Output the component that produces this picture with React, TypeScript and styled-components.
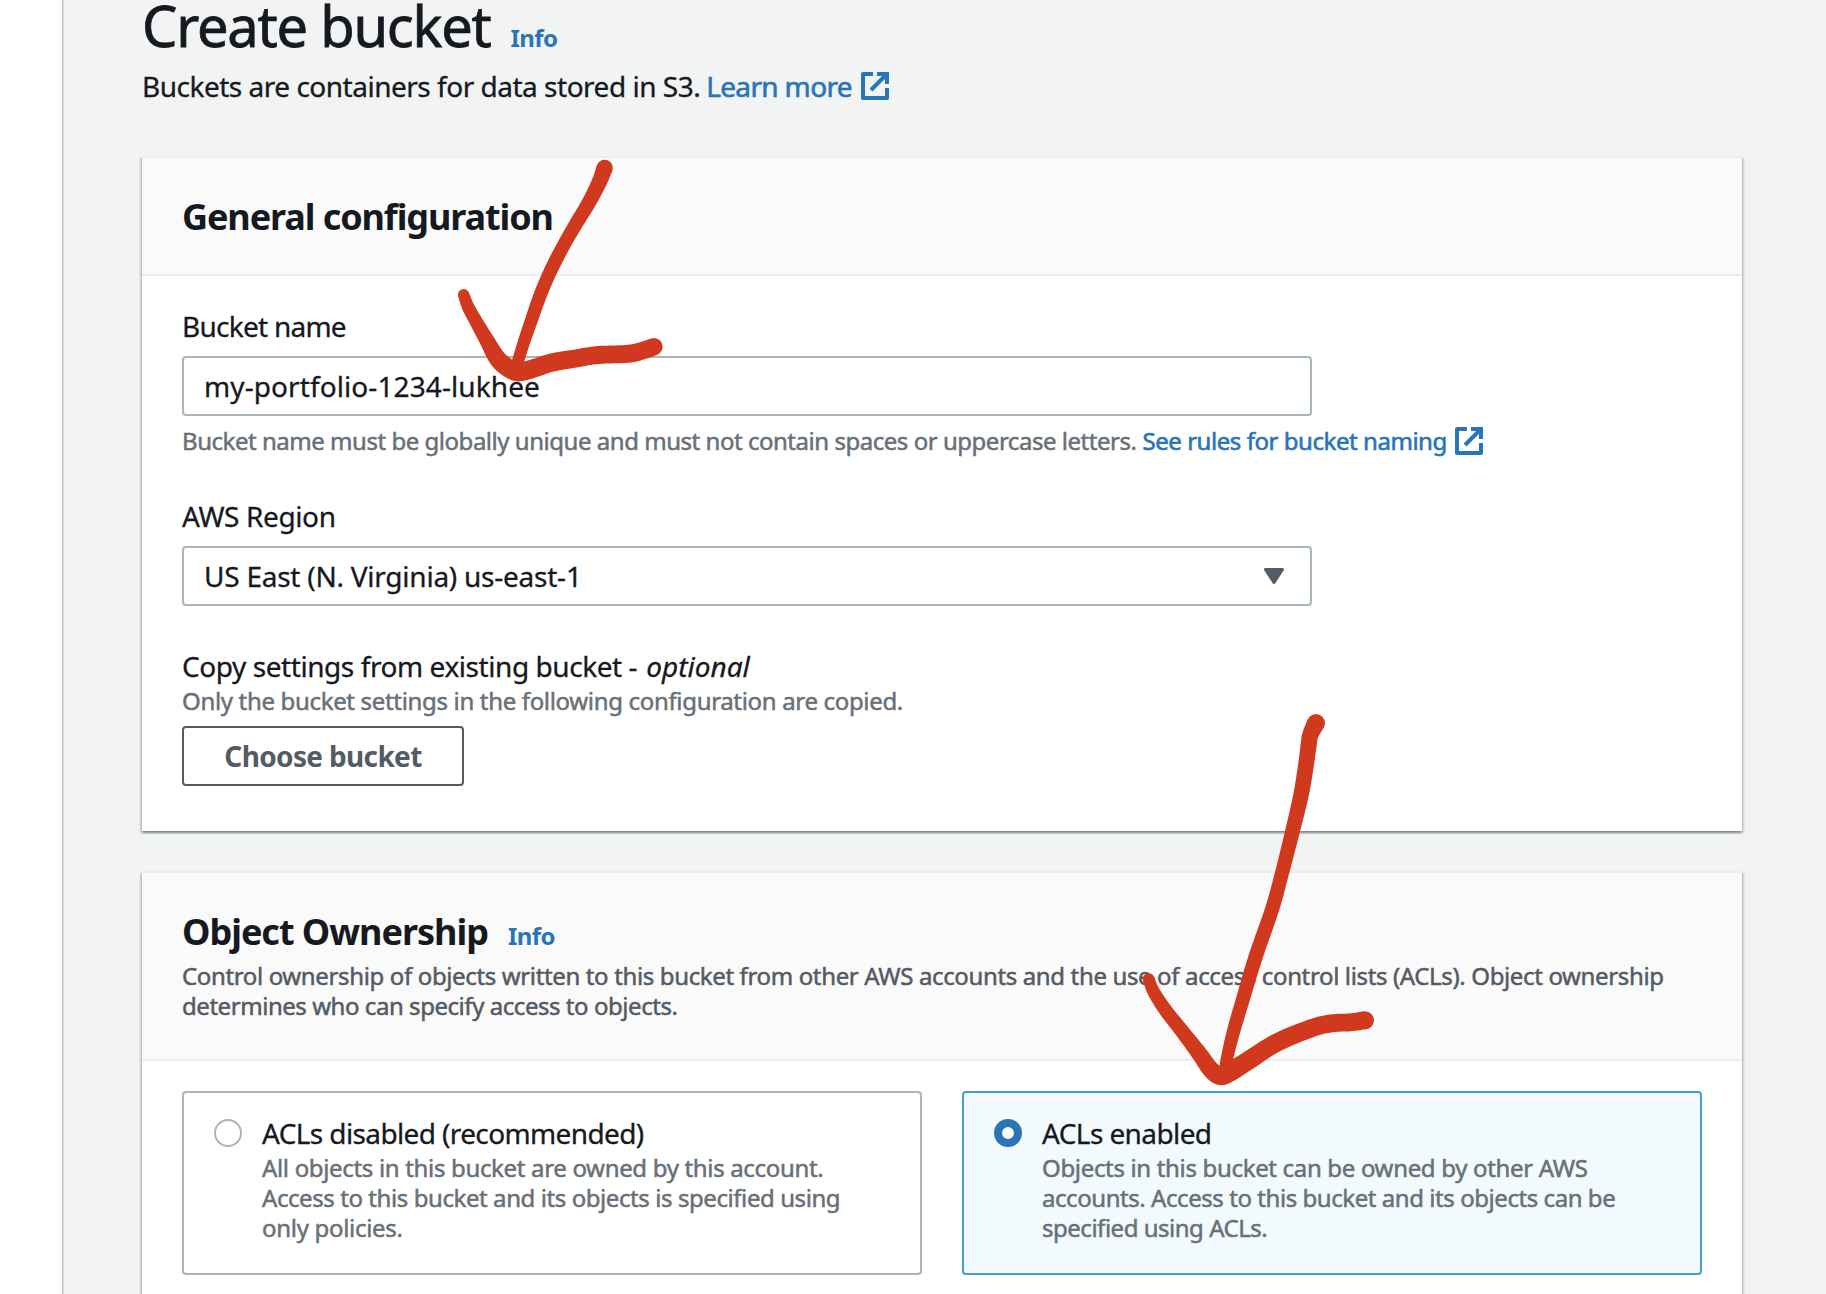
import React from "react";
import styled, { createGlobalStyle, css } from "styled-components";

const color = {
  text: "#16191f",
  secondary: "#545b64",
  muted: "#687078",
  link: "#2a74b8",
  border: "#aab7b8",
  divider: "#eaeded",
  page: "#f2f3f3",
  header: "#fafafa",
  selectedBorder: "#439fc7",
  selectedBg: "#f2fafd",
  ink: "#d1391f",
};

const GlobalStyle = createGlobalStyle`
  *, *::before, *::after { box-sizing: border-box; }
  html, body { margin: 0; padding: 0; overflow: hidden; }
  body {
    font-family: "Noto Sans", "Open Sans", sans-serif;
    font-size: 28px;
    color: ${color.text};
    background: ${color.page};
  }
  h1, h2, p { margin: 0; }
`;

const Page = styled.div`
  position: relative;
  display: flex;
  width: 1826px;
  height: 1294px;
  overflow: hidden;
  background: ${color.page};
`;

const SideStrip = styled.aside`
  flex: none;
  width: 63px;
  background: #fff;
  border-right: 1px solid #b3babd;
  box-shadow: 1px 0 0 #dde0e1;
`;

const Main = styled.main`
  flex: none;
  width: 1679px;
  padding-left: 79px;
`;

type Track = { $track?: number };
const tracking = css<Track>`
  letter-spacing: ${(p) => p.$track ?? 0}px;
  white-space: nowrap;
`;

const TitleRow = styled.div`
  display: flex;
  align-items: baseline;
  gap: 20px;
  height: 50px;
`;

const PageTitle = styled.h1<Track>`
  font-size: 56px;
  line-height: 50px;
  font-weight: 400;
  -webkit-text-stroke: 0.8px currentColor;
  ${tracking}
`;

const SectionTitle = styled.h2<Track>`
  font-size: 36px;
  line-height: 46px;
  font-weight: 700;
  ${tracking}
`;

const InfoLink = styled.a`
  font-size: 24px;
  line-height: 20px;
  font-weight: 700;
  letter-spacing: -0.6px;
  color: ${color.link};
`;

const Subtitle = styled.div`
  display: flex;
  align-items: center;
  gap: 6px;
  margin-top: 18px;
  line-height: 36px;
`;

const BodyText = styled.span<Track>`
  font-size: 28px;
  line-height: 36px;
  -webkit-text-stroke: 0.3px currentColor;
  ${tracking}
`;

const SmallText = styled.span<Track & { $tone?: "secondary" | "muted" }>`
  display: block;
  font-size: 24px;
  line-height: 30px;
  -webkit-text-stroke: 0.5px currentColor;
  color: ${(p) => (p.$tone === "secondary" ? color.secondary : color.muted)};
  ${tracking}
`;

const Link = styled.a<Track & { $size: number; $gap: number }>`
  display: flex;
  align-items: center;
  gap: ${(p) => p.$gap}px;
  font-size: ${(p) => p.$size}px;
  line-height: 30px;
  -webkit-text-stroke: 0.6px currentColor;
  color: ${color.link};
  ${tracking}
`;

const Card = styled.section<{ $gapTop: number }>`
  margin-top: ${(p) => p.$gapTop}px;
  border-top: 2px solid ${color.divider};
  background: #fff;
  box-shadow: 0 2px 2px 0 rgba(0, 28, 36, 0.3), 2px 2px 2px 0 rgba(0, 28, 36, 0.15),
    -2px 2px 2px 0 rgba(0, 28, 36, 0.15);
`;

const CardHeader = styled.header<{ $bottom: number }>`
  padding: 36px 40px ${(p) => p.$bottom}px;
  border-bottom: 2px solid ${color.divider};
  background: ${color.header};
`;

const HeaderRow = styled.div`
  display: flex;
  align-items: baseline;
  gap: 20px;
`;

const HeaderDescription = styled.div`
  margin-top: 6px;
`;

const Form = styled.div`
  display: flex;
  flex-direction: column;
  gap: 42px;
  padding: 32px 40px 45px;
`;

const Field = styled.div`
  display: flex;
  flex-direction: column;
  align-items: flex-start;
`;

const Control = styled.div`
  display: flex;
  align-items: center;
  justify-content: space-between;
  width: 1130px;
  height: 60px;
  margin-top: 12px;
  padding: 0 26px 0 20px;
  border: 2px solid ${color.border};
  border-radius: 4px;
  background: #fff;
`;

const Hint = styled.div`
  display: flex;
  align-items: center;
  gap: 6px;
  height: 30px;
  margin-top: 10px;
`;

const LabelRow = styled.div`
  display: flex;
  gap: 9px;
  margin-bottom: 2px;
`;

const Optional = styled.em`
  font-size: 28px;
  line-height: 36px;
  -webkit-text-stroke: 0.3px currentColor;
`;

const Button = styled.button<Track>`
  width: 282px;
  height: 60px;
  margin-top: 10px;
  padding: 0;
  border: 2px solid ${color.secondary};
  border-radius: 4px;
  background: #fff;
  color: ${color.secondary};
  font-family: inherit;
  font-size: 28px;
  line-height: 36px;
  font-weight: 700;
  ${tracking}
`;

const Tiles = styled.div`
  display: grid;
  grid-template-columns: 1fr 1fr;
  gap: 40px;
  padding: 30px 40px 60px;
`;

const Tile = styled.label<{ $selected?: boolean }>`
  display: flex;
  gap: 20px;
  height: 184px;
  padding: 22px 30px;
  border: 2px solid ${(p) => (p.$selected ? color.selectedBorder : color.border)};
  border-radius: 4px;
  background: ${(p) => (p.$selected ? color.selectedBg : "#fff")};
`;

const Radio = styled.span<{ $selected?: boolean }>`
  flex: none;
  width: 28px;
  height: 28px;
  margin-top: 4px;
  border: ${(p) => (p.$selected ? `8px solid ${color.link}` : `2px solid ${color.border}`)};
  border-radius: 50%;
  background: #fff;
`;

const TileBody = styled.div`
  display: flex;
  flex-direction: column;
`;

const TileText = styled.div`
  margin-top: 2px;
`;

const Drawing = styled.svg`
  position: absolute;
  inset: 0;
  pointer-events: none;
`;

function ExternalIcon() {
  return (
    <svg width="28" height="28" viewBox="0 0 28 28" fill="none" stroke={color.link} strokeWidth="4">
      <path d="M12 2H2V26H26V16" strokeLinejoin="round" />
      <path d="M16 2H26V12" />
      <path d="M10 18L25 3" />
    </svg>
  );
}

function Caret() {
  return (
    <svg width="20" height="16" viewBox="0 0 20 16">
      <path
        d="M1.5 1.5H18.5L10 14.5Z"
        fill={color.secondary}
        stroke={color.secondary}
        strokeWidth="3"
        strokeLinejoin="round"
      />
    </svg>
  );
}

/* A point of a pen stroke: x, y and the pen's radius there. */
type Pen = [number, number, number];

function sample(pts: Pen[], steps = 8): Pen[] {
  const out: Pen[] = [];
  for (let i = 0; i < pts.length - 1; i++) {
    const a = pts[i - 1] ?? pts[i];
    const b = pts[i];
    const c = pts[i + 1];
    const d = pts[i + 2] ?? c;
    for (let s = 0; s < steps; s++) {
      const t = s / steps;
      out.push(
        [0, 1, 2].map(
          (k) =>
            0.5 *
            (2 * b[k] +
              (c[k] - a[k]) * t +
              (2 * a[k] - 5 * b[k] + 4 * c[k] - d[k]) * t * t +
              (3 * b[k] - a[k] - 3 * c[k] + d[k]) * t * t * t)
        ) as Pen
      );
    }
  }
  out.push(pts[pts.length - 1]);
  return out;
}

function PenStroke({ points }: { points: Pen[] }) {
  const line = sample(points);
  const left: string[] = [];
  const right: string[] = [];
  line.forEach(([x, y, r], i) => {
    const p = line[Math.max(0, i - 1)];
    const n = line[Math.min(line.length - 1, i + 1)];
    const len = Math.hypot(n[0] - p[0], n[1] - p[1]) || 1;
    const nx = (-(n[1] - p[1]) / len) * r;
    const ny = ((n[0] - p[0]) / len) * r;
    left.push(`${(x + nx).toFixed(1)},${(y + ny).toFixed(1)}`);
    right.unshift(`${(x - nx).toFixed(1)},${(y - ny).toFixed(1)}`);
  });
  const first = line[0];
  const last = line[line.length - 1];
  return (
    <>
      <path d={`M${left.join("L")}L${right.join("L")}Z`} />
      <circle cx={first[0]} cy={first[1]} r={first[2]} />
      <circle cx={last[0]} cy={last[1]} r={last[2]} />
    </>
  );
}

const nameShaft: Pen[] = [
  [614, 54, 24.5], [597, 98, 23], [567, 157, 21.5], [529, 220, 20.8], [492, 284, 20.3], [453, 360, 20.3],
  [422, 432, 20], [392, 517, 19.3], [369, 585, 18.5], [352, 640, 18],
];
const nameHead: Pen[] = [
  [191, 434, 17], [204, 470, 18.8], [228, 514, 20], [260, 570, 22.5], [296, 630, 26.5], [342, 663, 28],
  [378, 662, 28], [455, 638, 27.5], [530, 625, 27], [595, 615, 26.8], [695, 610, 26.8], [762, 590, 26],
];
const aclShaft: Pen[] = [
  [558, 99, 27], [541, 135, 24.5], [535, 172, 24], [528, 225, 23.7], [513, 315, 23.2], [486, 430, 22],
  [457, 545, 21], [427, 655, 21.2], [377, 800, 21.5], [338, 930, 20.7], [309, 1030, 20], [290, 1110, 18.5],
  [286, 1140, 18],
];
const aclHead: Pen[] = [
  [56, 867, 17.5], [71, 905, 19], [107, 961, 20.5], [155, 1022, 21.5], [208, 1091, 24], [241, 1137, 26],
  [270, 1157, 28], [300, 1146, 29], [356, 1111, 28], [440, 1058, 27.5], [543, 1015, 27.2], [605, 1000, 26.8],
  [660, 997, 26.8], [705, 991, 27],
];

function Arrows() {
  return (
    <Drawing width="1826" height="1294" viewBox="0 0 1826 1294" fill={color.ink}>
      <g transform="translate(400 150) scale(0.33333)">
        <PenStroke points={nameShaft} />
        <PenStroke points={nameHead} />
      </g>
      <g transform="translate(1130 690) scale(0.33333)">
        <PenStroke points={aclShaft} />
        <PenStroke points={aclHead} />
      </g>
    </Drawing>
  );
}

type TileOption = { title: string; track: number; selected?: boolean; lines: [string, number][] };

const options: TileOption[] = [
  {
    title: "ACLs disabled (recommended)",
    track: -0.62,
    lines: [
      ["All objects in this bucket are owned by this account.", -0.33],
      ["Access to this bucket and its objects is specified using", -0.42],
      ["only policies.", -0.3],
    ],
  },
  {
    title: "ACLs enabled",
    track: -0.6,
    selected: true,
    lines: [
      ["Objects in this bucket can be owned by other AWS", -0.33],
      ["accounts. Access to this bucket and its objects can be", -0.44],
      ["specified using ACLs.", -0.48],
    ],
  },
];

export default function App() {
  return (
    <Page>
      <GlobalStyle />
      <SideStrip />
      <Main>
        <TitleRow>
          <PageTitle $track={-1.22}>Create bucket</PageTitle>
          <InfoLink>Info</InfoLink>
        </TitleRow>
        <Subtitle>
          <BodyText $track={-0.49}>Buckets are containers for data stored in S3.</BodyText>
          <Link $size={28} $gap={9} $track={-0.65}>
            Learn more
            <ExternalIcon />
          </Link>
        </Subtitle>

        <Card $gapTop={52}>
          <CardHeader $bottom={34}>
            <SectionTitle $track={-1.1}>General configuration</SectionTitle>
          </CardHeader>
          <Form>
            <Field>
              <BodyText $track={-0.74}>Bucket name</BodyText>
              <Control>
                <BodyText $track={0.09}>my-portfolio-1234-lukhee</BodyText>
              </Control>
              <Hint>
                <SmallText $track={-0.47}>
                  Bucket name must be globally unique and must not contain spaces or uppercase letters.
                </SmallText>
                <Link $size={24} $gap={8} $track={-0.45}>
                  See rules for bucket naming
                  <ExternalIcon />
                </Link>
              </Hint>
            </Field>
            <Field>
              <BodyText $track={-0.38}>AWS Region</BodyText>
              <Control>
                <BodyText $track={-0.24}>US East (N. Virginia) us-east-1</BodyText>
                <Caret />
              </Control>
            </Field>
            <Field>
              <LabelRow>
                <BodyText $track={-0.43}>Copy settings from existing bucket -</BodyText>
                <Optional>optional</Optional>
              </LabelRow>
              <SmallText $track={-0.33}>
                Only the bucket settings in the following configuration are copied.
              </SmallText>
              <Button $track={-0.65}>Choose bucket</Button>
            </Field>
          </Form>
        </Card>

        <Card $gapTop={40}>
          <CardHeader $bottom={38}>
            <HeaderRow>
              <SectionTitle $track={-1.02}>Object Ownership</SectionTitle>
              <InfoLink>Info</InfoLink>
            </HeaderRow>
            <HeaderDescription>
              <SmallText $tone="secondary" $track={-0.36}>
                Control ownership of objects written to this bucket from other AWS accounts and the use of
                access control lists (ACLs). Object ownership
              </SmallText>
              <SmallText $tone="secondary" $track={-0.45}>
                determines who can specify access to objects.
              </SmallText>
            </HeaderDescription>
          </CardHeader>
          <Tiles>
            {options.map((o) => (
              <Tile key={o.title} $selected={o.selected}>
                <Radio $selected={o.selected} />
                <TileBody>
                  <BodyText $track={o.track}>{o.title}</BodyText>
                  <TileText>
                    {o.lines.map(([line, track]) => (
                      <SmallText key={line} $track={track}>
                        {line}
                      </SmallText>
                    ))}
                  </TileText>
                </TileBody>
              </Tile>
            ))}
          </Tiles>
        </Card>
      </Main>
      <Arrows />
    </Page>
  );
}
